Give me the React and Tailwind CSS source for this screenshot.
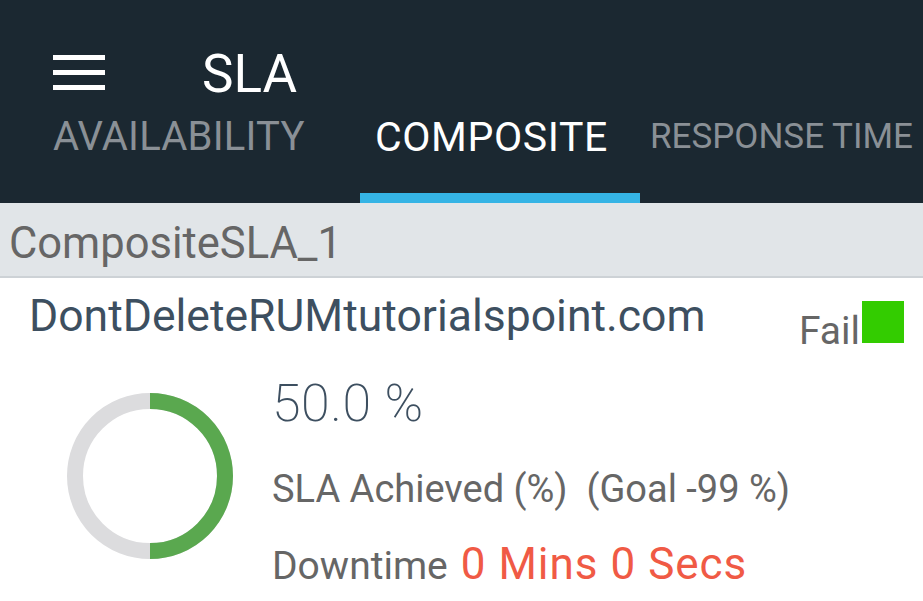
export default function App() {
  return (
    <div className="w-[923px] h-[601px] overflow-hidden bg-white font-['Roboto',sans-serif]">
      {/* Header */}
      <div className="bg-[#1b2831] h-[203px] flex flex-col">
        <div className="flex items-start h-[101px] pt-[48px]">
          <div className="ml-[53px] mt-[7px] w-[52px] flex flex-col gap-[10px]">
            <div className="h-[5px] bg-white" />
            <div className="h-[5px] bg-white" />
            <div className="h-[5px] bg-white" />
          </div>
          <div className="ml-[97px] text-white text-[53px] leading-none">SLA</div>
        </div>
        <div className="flex h-[102px]">
          <div className="w-[360px] pl-[53px] pt-[16px] text-[40px] leading-none text-[#8a9096] tracking-[0.2px]">AVAILABILITY</div>
          <div className="w-[280px] border-b-[10px] border-[#35b4e5] pl-[15px] pt-[16px] text-[41px] leading-none text-white tracking-[0.6px]">COMPOSITE</div>
          <div className="pl-[10px] pt-[18px] text-[35px] leading-none text-[#8a9096] whitespace-nowrap">RESPONSE TIME</div>
        </div>
      </div>

      {/* Group band */}
      <div className="bg-[#e1e5e8] h-[75px] border-b-[2px] border-[#cdd2d6] pl-[9px] pt-[19px] text-[43.5px] text-[#666] leading-none">
        CompositeSLA_1
      </div>

      {/* Monitor row */}
      <div className="flex justify-between items-start h-[100px]">
        <div className="pl-[29px] pt-[16px] text-[44.5px] leading-none text-[#3d4f60] whitespace-nowrap">DontDeleteRUMtutorialspoint.com</div>
        <div className="flex items-start pr-[19px] pt-[23px]">
          <span className="mt-[11px] text-[39px] leading-none text-[#666]">Fail</span>
          <span className="ml-[2px] w-[42px] h-[42px] bg-[#33cc00]" />
        </div>
      </div>

      {/* Detail */}
      <div className="flex">
        <div className="ml-[67px] mt-[15px] w-[166px] h-[166px] shrink-0">
          <svg width="166" height="166" viewBox="0 0 166 166">
            <circle cx="83" cy="83" r="75" fill="none" stroke="#dcdcde" strokeWidth="16" />
            <path d="M83 8 A75 75 0 0 1 83 158" fill="none" stroke="#5aa84f" strokeWidth="16" />
          </svg>
        </div>
        <div className="ml-[39px] flex flex-col">
          <div className="text-[52px] font-extralight leading-none text-[#3d4f60] tracking-[0.5px]">50.0 %</div>
          <div className="mt-[40px] text-[38px] leading-none text-[#666] whitespace-nowrap">SLA Achieved (%)&nbsp; (Goal -99 %)</div>
          <div className="mt-[34px] flex items-baseline gap-[13px] leading-none whitespace-nowrap">
            <span className="text-[39px] text-[#666]">Downtime</span>
            <span className="text-[44px] text-[#f05a45] tracking-[1px]">0 Mins 0 Secs</span>
          </div>
        </div>
      </div>
    </div>
  )
}
